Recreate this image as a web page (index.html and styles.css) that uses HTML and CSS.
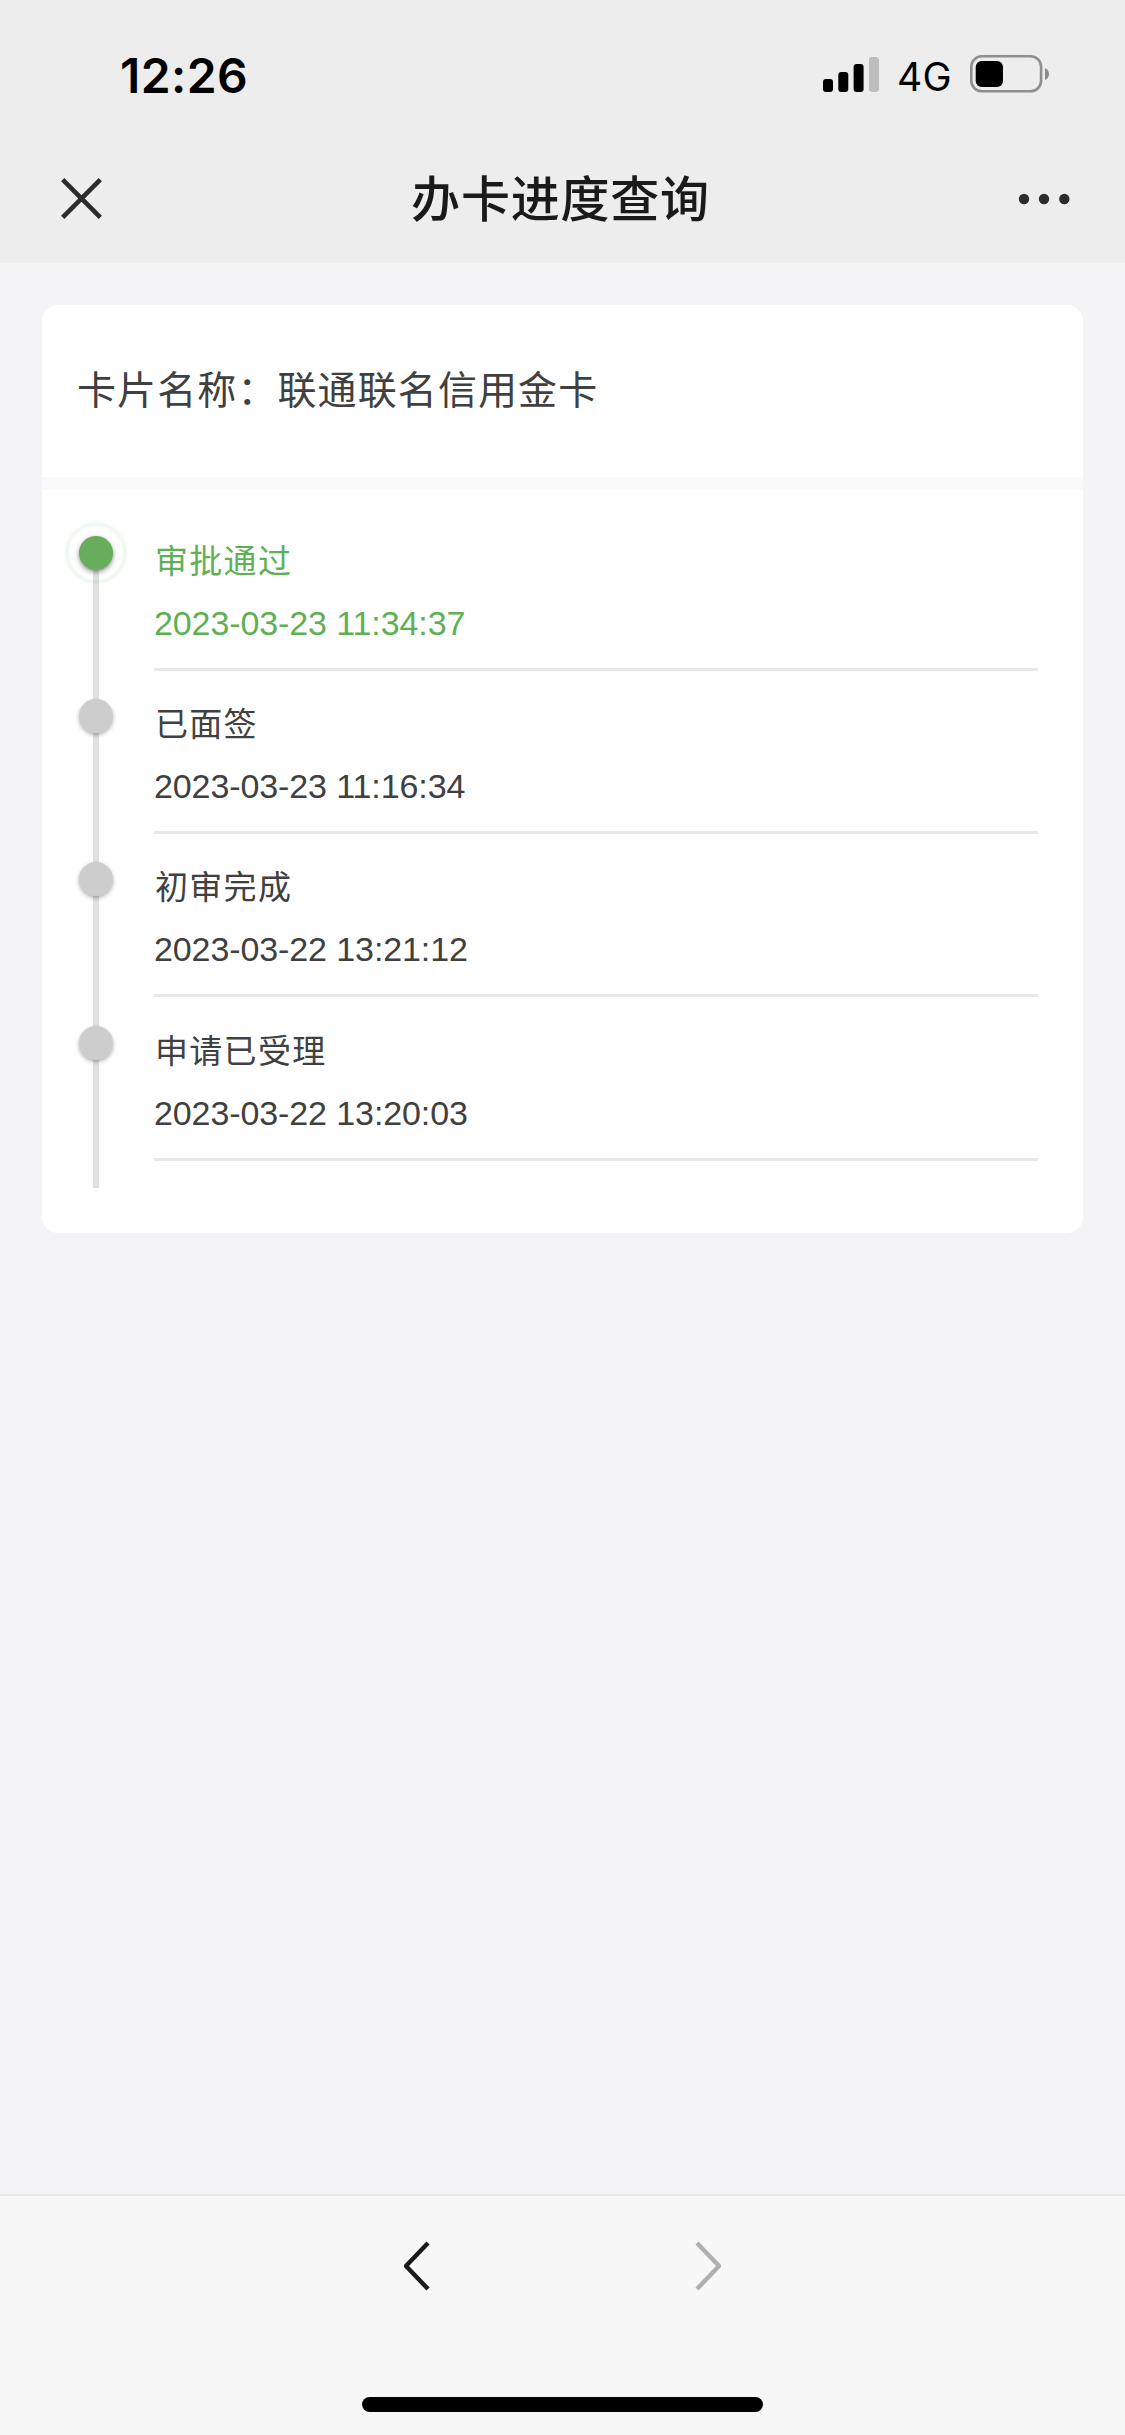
FILE: index.html
```html
<!DOCTYPE html>
<html lang="zh-CN">
<head>
    <meta charset="UTF-8">
    <meta name="viewport" content="width=device-width, initial-scale=1.0">
    <title>办卡进度查询</title>
    <link rel="stylesheet" href="styles.css">
</head>
<body>
    <header class="header">
        <div class="status-bar">
            <span class="time">12:26</span>
            <div class="status-icons">
                <svg class="signal" width="56" height="36" viewBox="0 0 56 36">
                    <rect x="0" y="22" width="10" height="13" rx="3"/>
                    <rect x="15.3" y="15" width="10" height="20" rx="3"/>
                    <rect x="30.6" y="7" width="10" height="28" rx="3"/>
                    <rect x="46" y="0" width="10" height="35" rx="3" fill="#bdbdbd"/>
                </svg>
                <span class="network">4G</span>
                <svg class="battery" width="80" height="38" viewBox="0 0 80 38">
                    <rect x="1.3" y="1.3" width="69.8" height="35" rx="10.5" fill="none" stroke="#8f8f8f" stroke-width="2.6"/>
                    <rect x="5.7" y="6" width="27.3" height="26" rx="6"/>
                    <path d="M75 13q4 2 4 6t-4 6z" fill="#8a8a8a"/>
                </svg>
            </div>
        </div>
        <nav class="nav-bar">
            <svg class="close" width="42" height="42" viewBox="0 0 42 42">
                <path d="M1.7 1.7L39.3 39.3M39.3 1.7L1.7 39.3" stroke="#2c2c2c" stroke-width="4.6"/>
            </svg>
            <h1 class="title">办卡进度查询</h1>
            <svg class="more" width="52" height="12" viewBox="0 0 52 12" fill="#2c2c2c">
                <circle cx="6" cy="6" r="5.2"/>
                <circle cx="26" cy="6" r="5.2"/>
                <circle cx="46.3" cy="6" r="5.2"/>
            </svg>
        </nav>
    </header>

    <main class="content">
        <section class="card">
            <p class="card-name">卡片名称：联通联名信用金卡</p>
            <ul class="steps">
                <li class="step active">
                    <div class="step-body">
                        <p class="step-name">审批通过</p>
                        <p class="step-time">2023-03-23 11:34:37</p>
                    </div>
                </li>
                <li class="step">
                    <div class="step-body">
                        <p class="step-name">已面签</p>
                        <p class="step-time">2023-03-23 11:16:34</p>
                    </div>
                </li>
                <li class="step">
                    <div class="step-body">
                        <p class="step-name">初审完成</p>
                        <p class="step-time">2023-03-22 13:21:12</p>
                    </div>
                </li>
                <li class="step">
                    <div class="step-body">
                        <p class="step-name">申请已受理</p>
                        <p class="step-time">2023-03-22 13:20:03</p>
                    </div>
                </li>
            </ul>
        </section>
    </main>

    <footer class="toolbar">
        <div class="arrows">
            <svg width="26" height="50" viewBox="0 0 26 50">
                <path d="M24 2L2 25L24 48" fill="none" stroke="#1a1a1a" stroke-width="4.4" stroke-linejoin="round"/>
            </svg>
            <svg width="26" height="50" viewBox="0 0 26 50">
                <path d="M2 2L24 25L2 48" fill="none" stroke="#b0b0b0" stroke-width="4.4" stroke-linejoin="round"/>
            </svg>
        </div>
        <div class="home-bar"></div>
    </footer>
</body>
</html>
```
FILE: styles.css
```css
* {
    box-sizing: border-box;
    margin: 0;
    padding: 0;
}

body {
    display: flex;
    flex-direction: column;
    height: 2435px;
    background: #f4f4f6;
    font-family: "Liberation Sans", "Noto Sans CJK SC", sans-serif;
    color: #404040;
}

svg {
    display: block;
}

.header {
    height: 263px;
    background: #ededed;
}

.status-bar {
    display: flex;
    justify-content: space-between;
    height: 136px;
    padding: 45px 75px 0 120px;
    font-family: Inter, sans-serif;
    color: #000;
}

.time {
    font-size: 48px;
    font-weight: 600;
    line-height: 61px;
    letter-spacing: 0.4px;
}

.status-icons {
    display: flex;
    align-items: flex-start;
}

.signal {
    margin-top: 12px;
}

.network {
    width: 72px;
    margin-left: 18px;
    margin-right: 1px;
    font-size: 39px;
    line-height: 63px;
    letter-spacing: 0.3px;
}

.battery {
    margin-top: 10px;
}

.nav-bar {
    display: flex;
    align-items: center;
    justify-content: space-between;
    height: 126px;
    padding: 0 55px 0 61px;
}

.title {
    padding-top: 2px;
    font-size: 49px;
    font-weight: 500;
    line-height: 60px;
    letter-spacing: 0.8px;
    color: #1a1a1a;
}

.content {
    flex: 1;
    padding: 42px;
}

.card {
    height: 928px;
    border-radius: 16px;
    background: #fff;
}

.card-name {
    height: 185px;
    padding: 56px 35px 0;
    border-bottom: 13px solid #f9f9f9;
    font-size: 39px;
    line-height: 60px;
    letter-spacing: 1.1px;
}

.steps {
    padding: 18px 45px 0 36px;
    list-style: none;
}

.step {
    position: relative;
    height: 163.2px;
    padding-left: 76px;
}

/* vertical line */
.step::before {
    content: "";
    position: absolute;
    left: 15px;
    top: 45px;
    width: 6px;
    height: 163px;
    background: #e0e0e0;
}

.step:last-child::before {
    height: 145px;
}

/* dot */
.step::after {
    content: "";
    position: absolute;
    z-index: 1;
    left: 1px;
    top: 28px;
    width: 34px;
    height: 34px;
    border-radius: 50%;
    background: #cdcdcd;
    box-shadow: 0 2px 4px rgba(0, 0, 0, 0.3);
}

.step.active {
    color: #5fb054;
}

.step.active::after {
    background: #67ad5b;
    box-shadow: 0 2px 5px rgba(0, 0, 0, 0.45);
}

/* halo round the current step */
.step.active .step-body::before {
    content: "";
    position: absolute;
    left: -13px;
    top: 14px;
    width: 54px;
    height: 54px;
    border: 4px solid rgba(95, 176, 84, 0.08);
    border-radius: 50%;
}

.step-body {
    height: 163px;
    padding-top: 29px;
    border-bottom: 3px solid #e8e8e8;
}

.step-name {
    padding-left: 1px;
    font-size: 33px;
    line-height: 50px;
    letter-spacing: 1.3px;
}

.step-time {
    margin-top: 11px;
    font-size: 34px;
    line-height: 50px;
    letter-spacing: -0.1px;
}

.toolbar {
    display: flex;
    flex-direction: column;
    align-items: center;
    justify-content: space-between;
    height: 241px;
    padding: 45px 0 23px;
    border-top: 2px solid #e6e6e6;
    background: #f7f7f7;
}

.arrows {
    display: flex;
    justify-content: space-between;
    width: 317px;
}

.home-bar {
    width: 401px;
    height: 15px;
    border-radius: 8px;
    background: #000;
}
```
